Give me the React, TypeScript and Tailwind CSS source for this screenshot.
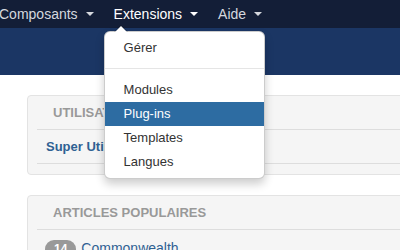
import { useState } from 'react'

const font = { fontFamily: '"Liberation Sans", Arial, sans-serif' }

function Caret({ className }: { className: string }) {
  return (
    <span
      className={`ml-[8px] inline-block h-0 w-0 border-x-[4px] border-t-[4px] border-x-transparent ${className}`}
    />
  )
}

function ExtensionsMenu() {
  const items = ['Modules', 'Plug-ins', 'Templates', 'Langues']
  const [active] = useState('Plug-ins')

  return (
    <div className="absolute left-0 top-[31px] z-50 w-[161px] rounded-[6px] border border-black/20 bg-white py-[4px] shadow-[0_5px_10px_rgba(0,0,0,0.2)]">
      {/* little arrow above the menu */}
      <span className="absolute -top-[7px] left-[9px] h-0 w-0 border-x-[7px] border-b-[7px] border-x-transparent border-b-black/20" />
      <span className="absolute -top-[6px] left-[10px] h-0 w-0 border-x-[6px] border-b-[6px] border-x-transparent border-b-white" />

      <div className="flex h-[24px] items-center px-[19px] text-[13px] text-[#333]">Gérer</div>
      <div className="mb-[9px] mt-[8px] h-px bg-[#e5e5e5]" />
      {items.map((item) => (
        <div
          key={item}
          className={
            item === active
              ? 'flex h-[24px] items-center bg-[#2d6ca2] px-[19px] text-[13px] text-white'
              : 'flex h-[24px] items-center px-[19px] text-[13px] text-[#333]'
          }
        >
          {item}
        </div>
      ))}
    </div>
  )
}

function Navbar() {
  return (
    <div className="h-[28px] bg-[#131e37]">
      <ul className="-ml-[11px] flex h-full items-stretch text-[14px]">
        <li className="flex items-center px-[10px] text-[#d5d8de]">
          Composants
          <Caret className="border-t-[#d5d8de]" />
        </li>
        <li className="relative flex items-center px-[10px] text-white">
          Extensions
          <Caret className="border-t-white" />
          <ExtensionsMenu />
        </li>
        <li className="flex items-center px-[10px] text-[#d5d8de]">
          Aide
          <Caret className="border-t-[#d5d8de]" />
        </li>
      </ul>
    </div>
  )
}

function Panel({ title, children }: { title: string; children: React.ReactNode }) {
  return (
    <div className="rounded-[4px] border border-[#e3e3e3] bg-[#f5f5f5] px-[9px] pb-[10px]">
      <div className="flex h-[34px] items-center border-b border-[#dddddd] pl-[16px] text-[13px] font-bold uppercase text-[#999]">
        {title}
      </div>
      {children}
    </div>
  )
}

export default function App() {
  return (
    <div className="h-[250px] w-[400px] overflow-hidden bg-white" style={font}>
      <Navbar />
      <div className="h-[47px] bg-[#1b3664]" />

      <div className="flex w-[440px] flex-col gap-[20px] pl-[27px] pt-[20px]">
        <Panel title="Utilisateurs connectés">
          <div className="flex h-[34px] items-center border-b border-[#dddddd] pl-[9px] text-[13px] font-bold text-[#2f6193]">
            Super Utilisateur
          </div>
        </Panel>

        <Panel title="Articles populaires">
          <div className="flex items-center gap-[5px] pl-[8px] pt-[8px]">
            <span className="rounded-[9px] bg-[#999] px-[9px] py-[2px] text-[12px] font-bold leading-[14px] text-white">
              14
            </span>
            <span className="text-[14px] text-[#2f6193]">Commonwealth</span>
          </div>
        </Panel>
      </div>
    </div>
  )
}
